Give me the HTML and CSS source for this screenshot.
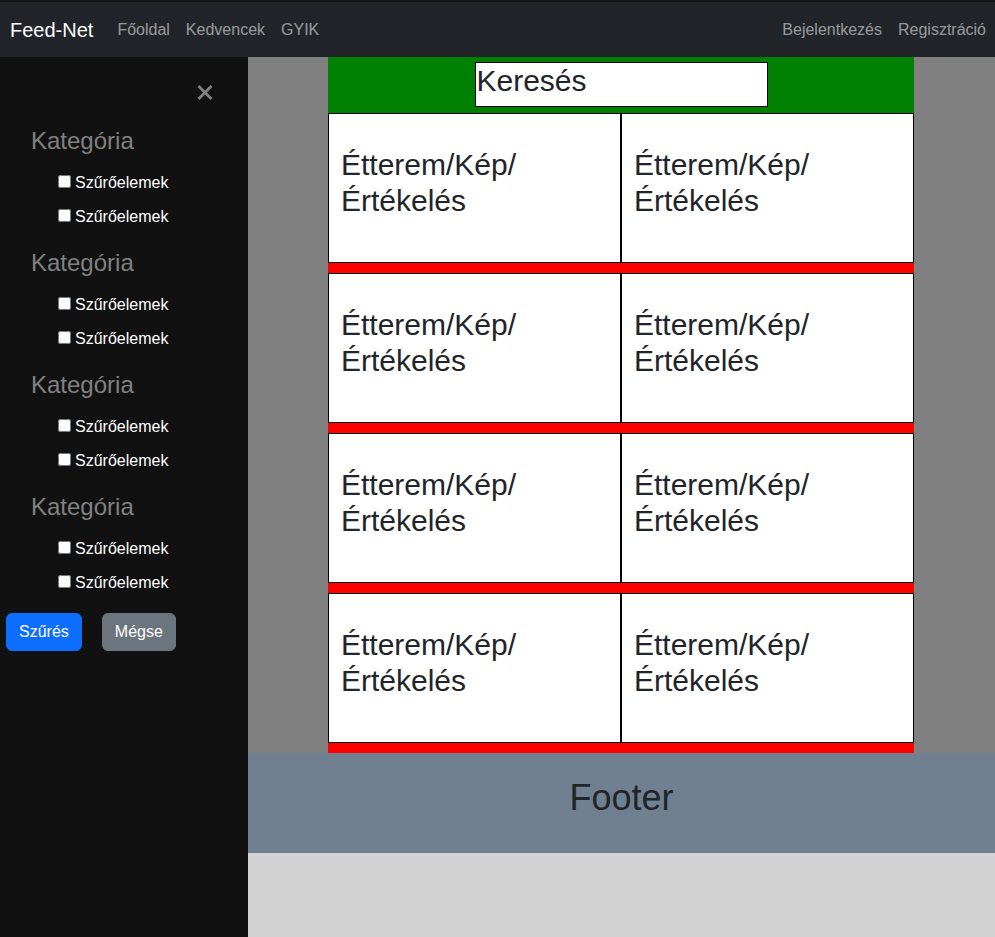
FILE: index.html
```html
<!DOCTYPE html>
<html lang="hu">
<head>
<meta charset="utf-8">
<title>Feed-Net</title>
<link rel="stylesheet" href="styles.css">
</head>
<body>
<nav class="navbar">
  <a class="brand" href="#">Feed-Net</a>
  <ul class="nav-links">
    <li><a href="#">Főoldal</a></li>
    <li><a href="#">Kedvencek</a></li>
    <li><a href="#">GYIK</a></li>
  </ul>
  <ul class="nav-links nav-right">
    <li><a href="#">Bejelentkezés</a></li>
    <li><a href="#">Regisztráció</a></li>
  </ul>
</nav>
<div class="layout">
  <aside class="sidebar">
    <div class="close-row">
      <svg class="close-icon" width="16" height="15" viewBox="0 0 16 15"><path d="M1.5 1 L14.5 14 M14.5 1 L1.5 14" stroke="#818181" stroke-width="2.8" fill="none"/></svg>
    </div>
    <div class="group">
      <h3>Kategória</h3>
      <label class="check"><input type="checkbox">Szűrőelemek</label>
      <label class="check"><input type="checkbox">Szűrőelemek</label>
    </div>
    <div class="group">
      <h3>Kategória</h3>
      <label class="check"><input type="checkbox">Szűrőelemek</label>
      <label class="check"><input type="checkbox">Szűrőelemek</label>
    </div>
    <div class="group">
      <h3>Kategória</h3>
      <label class="check"><input type="checkbox">Szűrőelemek</label>
      <label class="check"><input type="checkbox">Szűrőelemek</label>
    </div>
    <div class="group">
      <h3>Kategória</h3>
      <label class="check"><input type="checkbox">Szűrőelemek</label>
      <label class="check"><input type="checkbox">Szűrőelemek</label>
    </div>
    <div class="actions">
      <button class="btn btn-primary">Szűrés</button>
      <button class="btn btn-secondary">Mégse</button>
    </div>
  </aside>
  <div class="main">
    <section class="content-area">
      <div class="content">
        <div class="search-bar"><input class="search" type="text" value="Keresés"></div>
        <div class="row">
          <div class="cell"><h2>Étterem/Kép/Értékelés</h2></div>
          <div class="cell"><h2>Étterem/Kép/Értékelés</h2></div>
        </div>
        <div class="row">
          <div class="cell"><h2>Étterem/Kép/Értékelés</h2></div>
          <div class="cell"><h2>Étterem/Kép/Értékelés</h2></div>
        </div>
        <div class="row">
          <div class="cell"><h2>Étterem/Kép/Értékelés</h2></div>
          <div class="cell"><h2>Étterem/Kép/Értékelés</h2></div>
        </div>
        <div class="row">
          <div class="cell"><h2>Étterem/Kép/Értékelés</h2></div>
          <div class="cell"><h2>Étterem/Kép/Értékelés</h2></div>
        </div>
      </div>
    </section>
    <footer class="footer"><h2>Footer</h2></footer>
    <div class="filler"></div>
  </div>
</div>
</body>
</html>
```
FILE: styles.css
```css
* { box-sizing: border-box; }

html, body { height: 100%; }

body {
  margin: 0;
  font-family: "Liberation Sans", Arial, sans-serif;
  font-size: 16px;
  line-height: 1.5;
  color: #212529;
  background: #d3d3d3;
  display: flex;
  flex-direction: column;
}

/* Navbar */
.navbar {
  height: 57px;
  flex: 0 0 57px;
  border-top: 2px solid #141414;
  background: #212529;
  display: flex;
  align-items: center;
  padding: 1px 1px 0 10px;
}

.brand {
  color: #fff;
  font-size: 20px;
  line-height: 30px;
  text-decoration: none;
  margin-right: 16px;
}

.nav-links {
  list-style: none;
  margin: 0;
  padding: 0;
  display: flex;
}

.nav-links a {
  display: block;
  padding: 0 8px;
  line-height: 24px;
  font-size: 16px;
  color: rgba(255, 255, 255, 0.55);
  text-decoration: none;
}

.nav-right { margin-left: auto; }

/* Layout */
.layout {
  flex: 1;
  display: flex;
  min-height: 0;
}

.sidebar {
  width: 248px;
  flex: 0 0 248px;
  background: #111;
}

.close-row {
  display: flex;
  justify-content: flex-end;
  padding: 28px 35px 0 0;
}

.close-icon { display: block; }

.group { margin-top: 14px; }
.close-row + .group { margin-top: 26px; }

.group h3 {
  margin: 0 0 11px;
  padding-left: 31px;
  font-size: 24px;
  line-height: 29px;
  font-weight: normal;
  color: #818181;
}

.check {
  display: flex;
  align-items: center;
  height: 34px;
  padding-left: 58px;
  color: #fff;
  font-size: 16px;
  line-height: 34px;
}

.check input {
  width: 13px;
  height: 13px;
  margin: 0 4px 3px 0;
}

.actions {
  display: flex;
  gap: 20px;
  margin-top: 13px;
  padding-left: 6px;
}

.btn {
  font-family: "Liberation Sans", Arial, sans-serif;
  font-size: 16px;
  line-height: 24px;
  padding: 6px 12px;
  border: 1px solid transparent;
  border-radius: 6px;
  color: #fff;
  cursor: pointer;
}

.btn-primary { background: #0d6efd; border-color: #0d6efd; }
.btn-secondary { background: #6c757d; border-color: #6c757d; }

/* Main */
.main {
  flex: 1;
  display: flex;
  flex-direction: column;
}

.content-area {
  background: #808080;
  padding-left: 80px;
}

.content { width: 586px; }

.search-bar {
  height: 56px;
  background: #008000;
  display: flex;
  justify-content: center;
  padding-top: 5px;
}

.search {
  width: 50%;
  height: 45px;
  border: 1px solid #000;
  border-radius: 0;
  padding: 0 1px 8px;
  font-family: "Liberation Sans", Arial, sans-serif;
  font-size: 30px;
  color: #212529;
  background: #fff;
  outline: none;
}

.row {
  display: grid;
  grid-template-columns: 1fr 1fr;
  border-bottom: 10px solid #ff0000;
}

.cell {
  height: 150px;
  border: 1px solid #000;
  background: #fff;
  padding: 33px 12px 0;
}

.cell h2 {
  margin: 0;
  font-size: 30px;
  line-height: 36px;
  font-weight: normal;
  color: #212529;
}

.footer {
  height: 100px;
  background: #708090;
  text-align: center;
  padding-top: 23px;
}

.footer h2 {
  margin: 0;
  font-size: 36px;
  line-height: 43px;
  font-weight: normal;
  color: #212529;
}

.filler {
  flex: 1;
  background: #d3d3d3;
}
```
